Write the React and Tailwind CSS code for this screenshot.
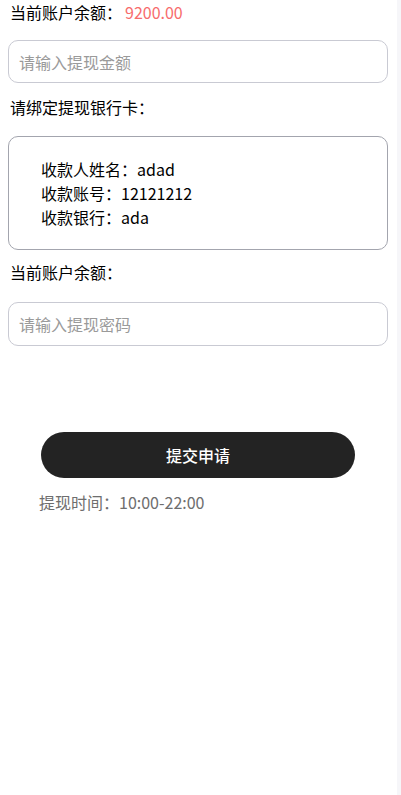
export default function App() {
  return (
    <div className="flex min-h-[795px] w-[401px] bg-white" style={{ fontFamily: '"Noto Sans CJK SC", "Noto Sans", sans-serif' }}>
      <div className="flex w-[397px] flex-col text-[16px] text-black">
        <div className="flex h-[24px] items-center pl-[10px] leading-[24px]">
          <span>当前账户余额：</span>
          <span className="ml-[3px] text-[#f76c6c]">9200.00</span>
        </div>
        <div className="ml-[8px] mt-[16px] flex h-[43px] w-[380px] items-center rounded-[10px] border border-[#c9cad3] px-[10px]">
          <input className="w-full bg-transparent text-[16px] outline-none placeholder:text-[#9a9a9a]" placeholder="请输入提现金额" />
        </div>
        <div className="mt-[12px] pl-[10px] leading-[24px]">请绑定提现银行卡：</div>
        <div className="ml-[8px] mt-[17px] flex h-[114px] w-[380px] flex-col justify-center rounded-[10px] border border-[#a3a5ae] pl-[32px] leading-[24px]">
          <div>收款人姓名：adad</div>
          <div>收款账号：12121212</div>
          <div>收款银行：ada</div>
        </div>
        <div className="mt-[10px] pl-[10px] leading-[24px]">当前账户余额：</div>
        <div className="ml-[8px] mt-[18px] flex h-[44px] w-[380px] items-center rounded-[10px] border border-[#c9cad3] px-[10px]">
          <input className="w-full bg-transparent text-[16px] outline-none placeholder:text-[#9a9a9a]" placeholder="请输入提现密码" />
        </div>
        <button className="ml-[41px] mt-[86px] flex h-[46px] w-[314px] items-center justify-center rounded-full bg-[#232323] text-[16px] font-medium text-white">
          提交申请
        </button>
        <div className="mt-[12px] pl-[39px] leading-[24px] text-[#6e6e6e]">提现时间：10:00-22:00</div>
      </div>
      <div className="w-[4px] bg-[#f6f6f9]" />
    </div>
  );
}
